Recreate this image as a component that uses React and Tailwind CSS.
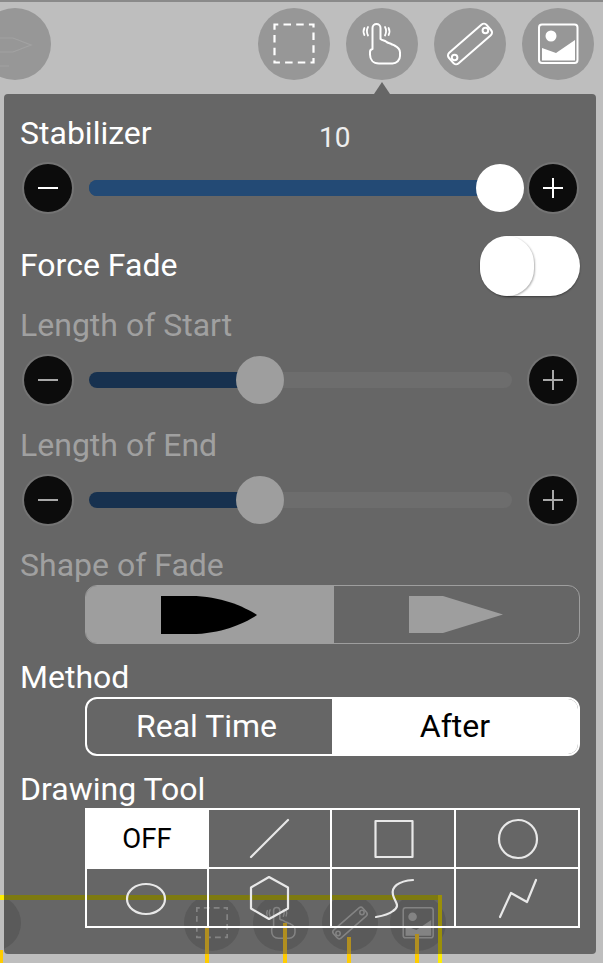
const roboto = { fontFamily: "Roboto, 'Liberation Sans', sans-serif" };

function SelectIcon() {
  return (
    <svg viewBox="0 0 72 72" className="w-full h-full" fill="none" stroke="#fff" strokeWidth="2.2">
      <rect x="16.5" y="16.5" width="39" height="38" strokeDasharray="7.5 5.2" strokeDashoffset="3.7" />
    </svg>
  );
}
function HandIcon() {
  return (
    <svg viewBox="0 0 72 72" className="w-full h-full" fill="none" stroke="#fff" strokeWidth="2" strokeLinecap="round" strokeLinejoin="round">
      <path d="M26.5 41 V20 a4 4 0 0 1 8 0 V31 c2 1.5 4 1.5 5.5 2.5 c1.5 1.5 3 1.5 4.5 2 c1.5 1.5 3 1 4 2 c3 1.5 5.5 3 5.5 7 V48 a7.5 7.5 0 0 1 -7.5 7.5 H33 c-6 0 -9 -4 -9 -9 V44 a3 3 0 0 1 2.5 -3 Z" />
      <path d="M22 19 q-2.2 4 0 8.5 M18.4 20 q-1.8 3.5 0 7 M39 19 q2.2 4 0 8.5 M42.6 20 q1.8 3.5 0 7" strokeWidth="1.8" />
    </svg>
  );
}
function RulerIcon() {
  return (
    <svg viewBox="0 0 72 72" className="w-full h-full" fill="none" stroke="#fff" strokeWidth="2">
      <rect x="11" y="29" width="50" height="14" rx="3.5" transform="rotate(-41 36 36)" />
      <circle cx="20.6" cy="49.5" r="2.8" />
      <circle cx="51.4" cy="22.5" r="2.8" />
    </svg>
  );
}
function ImageIcon() {
  return (
    <svg viewBox="0 0 72 72" className="w-full h-full">
      <rect x="17" y="16.5" width="38.5" height="38.5" rx="3" fill="none" stroke="#fff" strokeWidth="2" />
      <circle cx="29" cy="28" r="5.5" fill="#fff" />
      <path d="M20 40 L34 45 L53 32 V52.5 H20 Z" fill="#fff" />
    </svg>
  );
}
function ArrowIcon() {
  return (
    <svg viewBox="0 0 72 72" className="w-full h-full" fill="none" stroke="#a2a2a2" strokeWidth="1.2">
      <path d="M0 30 H34 L52 37 L34 44 H0 M0 58 H30" />
    </svg>
  );
}

function RoundButton({ children }) {
  return <div className="shrink-0 w-[72px] h-[72px] rounded-full bg-[#979797]">{children}</div>;
}

function StepButton({ sign, dim }) {
  const c = dim ? "#a8a8a8" : "#ffffff";
  return (
    <div className="shrink-0 w-[48px] h-[48px] rounded-full bg-[#0c0c0c] ring-2 ring-[#747474]">
      <svg viewBox="0 0 48 48" className="w-full h-full" fill="none" stroke={c} strokeWidth="2">
        <path d="M14 24 H34" />
        {sign === "+" && <path d="M24 14 V34" />}
      </svg>
    </div>
  );
}

function Slider({ value, dim }) {
  return (
    <div className="flex items-center h-[50px] ml-[4px] mr-[3px]">
      <StepButton sign="-" dim={dim} />
      <div className={`relative flex-1 h-4 mx-[17px] rounded-full ${dim ? "bg-[#6d6d6d]" : "bg-[#234a75]"}`}>
        <div className={`absolute left-0 top-0 h-4 rounded-l-full ${dim ? "bg-[#17314f]" : "bg-[#234a75]"}`} style={{ width: value }} />
        <div
          className={`absolute top-[-16px] w-12 h-12 -ml-6 rounded-full ${dim ? "bg-[#9e9e9e]" : "bg-white"}`}
          style={{ left: value }}
        />
      </div>
      <StepButton sign="+" dim={dim} />
    </div>
  );
}

function Cell({ on, children }) {
  return (
    <div className={`h-[59px] border-r-2 border-b-2 border-white flex items-center justify-center ${on ? "bg-white" : ""}`}>
      {children}
    </div>
  );
}

function Shape({ children }) {
  return (
    <svg viewBox="0 0 121 57" className="w-[121px] h-[57px] block shrink-0" fill="none" stroke="#e8e8e8" strokeWidth="2.2" strokeLinecap="round" strokeLinejoin="round">
      {children}
    </svg>
  );
}

function GhostCircle({ cls, children }) {
  return (
    <div className={`absolute top-[801px] w-[56px] h-[56px] rounded-full bg-[#5a5a5a] ${cls}`}>
      <div className="w-full h-full opacity-25">{children}</div>
    </div>
  );
}

export default function App() {
  return (
    <div className="relative w-[603px] h-[963px] overflow-hidden bg-[#bebebe] border-t-2 border-[#8a8a8a]" style={roboto}>
      {/* bright lines of the canvas that lies under the panel */}
      <div className="absolute left-0 top-[893px] w-[4px] h-[5px] bg-[#ffee00]" />
      <div className="absolute left-0 top-[948px] w-[3px] h-[13px] bg-[#ffcc00]" />
      <div className="absolute left-[205px] top-[940px] w-[4px] h-[21px] bg-[#ffcc00]" />
      <div className="absolute left-[283px] top-[940px] w-[4px] h-[21px] bg-[#ffcc00]" />
      <div className="absolute left-[347px] top-[940px] w-[4px] h-[21px] bg-[#ffcc00]" />
      <div className="absolute left-[415px] top-[940px] w-[4px] h-[21px] bg-[#ffcc00]" />
      <div className="absolute left-[438px] top-[940px] w-[4px] h-[21px] bg-[#ffee00]" />

      {/* toolbar */}
      <div className="flex items-center justify-between h-[84px] pr-[9px]">
        <div className="-ml-[21px]">
          <RoundButton><ArrowIcon /></RoundButton>
        </div>
        <div className="flex gap-4">
          <RoundButton><SelectIcon /></RoundButton>
          <RoundButton><HandIcon /></RoundButton>
          <RoundButton><RulerIcon /></RoundButton>
          <RoundButton><ImageIcon /></RoundButton>
        </div>
      </div>

      {/* panel */}
      <div className="relative mt-2 ml-1 mr-[7px] h-[860px] rounded bg-[#666666]">
        <div className="absolute -top-[12px] left-[370px] w-0 h-0 border-x-[8px] border-x-transparent border-b-[12px] border-b-[#666666]" />

        {/* what shows through the panel */}
        <div className="absolute inset-0 overflow-hidden rounded">
          <GhostCircle cls="-left-[39px]" />
          <GhostCircle cls="left-[180px]"><SelectIcon /></GhostCircle>
          <GhostCircle cls="left-[249px]"><HandIcon /></GhostCircle>
          <GhostCircle cls="left-[318px]"><RulerIcon /></GhostCircle>
          <GhostCircle cls="left-[386px]"><ImageIcon /></GhostCircle>
          <div className="absolute left-0 top-[801px] w-[438px] h-[5px] bg-[#7d7a10]" />
          <div className="absolute left-[434px] top-[801px] w-[4px] h-[59px] bg-[#9a8f08]" />
          <div className="absolute left-[201px] top-[832px] w-[4px] h-[28px] bg-[#b08e20]" />
          <div className="absolute left-[279px] top-[829px] w-[4px] h-[31px] bg-[#b08e20]" />
          <div className="absolute left-[343px] top-[843px] w-[4px] h-[17px] bg-[#b08e20]" />
          <div className="absolute left-[411px] top-[840px] w-[4px] h-[20px] bg-[#b08e20]" />
        </div>

        <div className="relative flex flex-col pl-[16px] pr-[16px] pt-[9px]">
          <div className="flex items-center h-[60px] text-[32px] text-white leading-none">
            <span className="w-[131px] whitespace-nowrap">Stabilizer</span>
            <span className="ml-[168px] mt-[10px] text-[28px] text-[#eeeeee]">10</span>
          </div>
          <Slider value="411px" />

          <div className="flex items-center justify-between h-[60px] mt-[23px] text-[32px] text-white leading-none">
            <span className="pb-[2px]">Force Fade</span>
            <div className="w-[100px] h-[60px] rounded-full bg-white shadow-[0_1px_2px_rgba(0,0,0,0.4)]">
              <div className="w-[54px] h-[60px] rounded-full bg-white shadow-[1px_1px_2px_rgba(0,0,0,0.3)]" />
            </div>
          </div>

          <div className="flex items-center h-[40px] mt-[9px] text-[32px] text-[#a0a0a0] leading-none">Length of Start</div>
          <div className="mt-[10px]"><Slider value="171px" dim /></div>

          <div className="flex items-center h-[40px] mt-[20px] text-[32px] text-[#a0a0a0] leading-none">Length of End</div>
          <div className="mt-[10px]"><Slider value="171px" dim /></div>

          <div className="flex items-center h-[40px] mt-[20px] text-[32px] text-[#a0a0a0] leading-none">Shape of Fade</div>
          <div className="flex h-[59px] ml-[65px] rounded-xl border-[1.5px] border-[#9e9e9e] overflow-hidden">
            <div className="w-[248px] pr-[2px] bg-[#9e9e9e] flex items-center justify-center">
              <svg viewBox="0 0 96 38" className="w-[96px] h-[38px]">
                <path d="M0 0 H30 C 60 0 84 11 96 19 C 84 27 60 38 30 38 H0 Z" fill="#000" />
              </svg>
            </div>
            <div className="flex-1 pr-[2px] flex items-center justify-center">
              <svg viewBox="0 0 94 37" className="w-[94px] h-[37px]">
                <path d="M0 0 H34 L94 18.5 L34 37 H0 Z" fill="#9e9e9e" />
              </svg>
            </div>
          </div>

          <div className="flex items-center h-[40px] mt-[13px] text-[32px] text-white leading-none">Method</div>
          <div className="flex h-[59px] ml-[65px] rounded-xl border-2 border-white overflow-hidden text-[32px] leading-none">
            <div className="w-[245px] pr-[6px] pb-[2px] flex items-center justify-center text-white">Real Time</div>
            <div className="flex-1 pb-[2px] flex items-center justify-center bg-white text-black">After</div>
          </div>

          <div className="flex items-center h-[39px] mt-[13px] text-[32px] text-white leading-none">Drawing Tool</div>
          <div className="grid grid-cols-[122px_123px_124px_124px] ml-[65px] border-l-2 border-t-2 border-white">
            <Cell on><span className="text-[27.5px] text-black leading-none">OFF</span></Cell>
            <Cell><Shape><path d="M42 47 L79 10" /></Shape></Cell>
            <Cell><Shape><rect x="42.5" y="11" width="37" height="36" /></Shape></Cell>
            <Cell><Shape><circle cx="61" cy="29" r="19" /></Shape></Cell>
            <Cell><Shape><ellipse cx="59" cy="30" rx="19" ry="15" /></Shape></Cell>
            <Cell><Shape><path d="M60 8 L79 18.5 V39.5 L60 50 L42 39.5 V18.5 Z" /></Shape></Cell>
            <Cell><Shape><path d="M80 11 C 65 12 58 18 60 26 C 62 34 68 36 60 42 C 55 46 49 47 43 48" /></Shape></Cell>
            <Cell><Shape><path d="M43 48 L54 24 L70 33 L79 11" /></Shape></Cell>
          </div>
        </div>
      </div>
    </div>
  );
}
